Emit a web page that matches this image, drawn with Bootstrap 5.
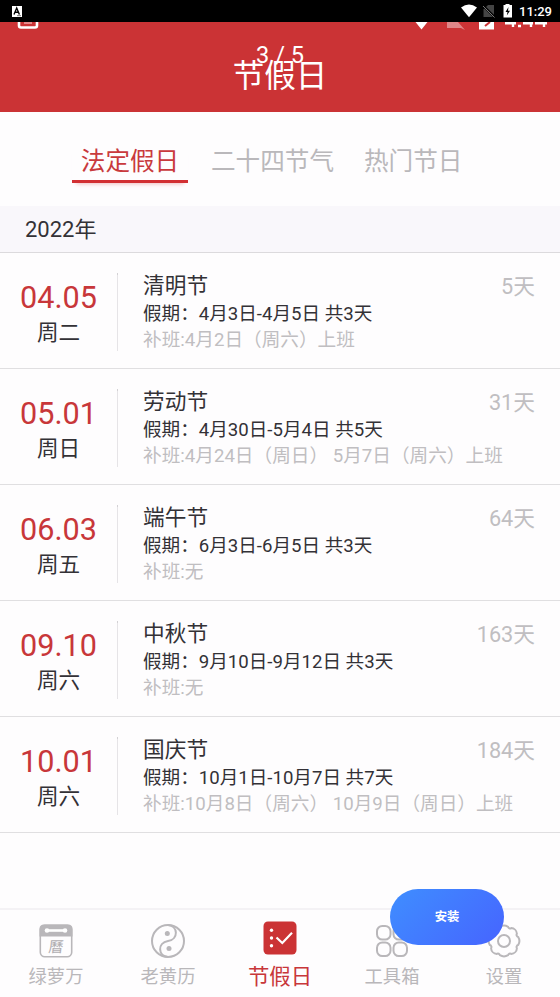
<!DOCTYPE html>
<html lang="zh-CN">
<head>
<meta charset="utf-8">
<meta name="viewport" content="width=device-width, initial-scale=1">
<title>节假日</title>
<link rel="stylesheet" href="https://cdn.jsdelivr.net/npm/bootstrap@5.3.0/dist/css/bootstrap.min.css">
<style>
body{font-family:Roboto,"Noto Sans CJK SC",sans-serif;background:#fefdfe;color:#333136;width:560px;height:997px;overflow:hidden}
.statusbar{height:22px;background:#000;flex:none}
.clock{font-size:13px;font-weight:500;line-height:23px}
.app-header{height:90px;background:#cb3335;flex:none;overflow:hidden}
.app-title{font-size:31.5px;line-height:40px;padding-top:35px}
.under-status{top:0;left:0}
.pager{top:19px;left:0;font-size:23.6px;line-height:28px}
.tabs{height:94px;flex:none;padding:32px 0 0 72px;font-size:24.6px;line-height:36px;color:#bab8bb}
.tab-on{width:116px;color:#c93a3d;height:39px;border-bottom:3px solid #d22f33;box-shadow:0 5px 4px -4px #f0bcc0}
.tab-second{margin-left:23px}
.tab-third{margin-left:30px}
.year{height:47px;flex:none;background:#f9f7fb;border-bottom:1px solid #dcdadd;padding-left:25px;font-size:22px;line-height:48px}
.holiday{height:116px;border-bottom:1px solid #e0dfe1}
.date-col{width:117px;padding-top:27px}
.date-num{font-size:30.6px;line-height:36px;color:#c8373a}
.weekday{font-size:21.6px;line-height:34px}
.rule{width:1px;height:78px;margin-top:20px;background:#e6e4e7;border-top:2px solid #d3d1d4}
.info{padding:19px 25px 0 25px}
.hname{font-size:21.7px;line-height:28px}
.days{font-size:21.7px;line-height:30px;color:#c0bec1}
.span-line{font-size:18.6px;line-height:27px;margin-top:-1px}
.work-line{font-size:18.65px;line-height:25px;color:#c0bec1}
.bottom{height:89px;border-top:2px solid #f4f2f5;color:#b9b7ba;font-size:18.3px;line-height:28px}
.bottom .slot{width:112px;padding-top:13px}
.bottom .slot.on{color:#c8373a;font-size:21.4px;padding-top:10px}
.slot svg{display:block;width:36px;height:36px;flex:none}
.slot span{margin-top:4px}
.slot.on span{margin-top:7px}
.install{left:390px;top:889px;width:114px;height:56px;font-size:12.3px;font-weight:700;color:#fff;background:linear-gradient(135deg,#3f8eff,#4664ff)}
</style>
</head>
<body class="d-flex flex-column position-relative">
<div class="statusbar d-flex align-items-center text-white">
<svg width="560" height="22" class="position-absolute">
<rect x="12" y="6" width="10" height="11" fill="#fff"/><path d="M14 14.500L16.700 8L19.400 14.500M15 12.300H18.400" fill="none" stroke="#000" stroke-width="1.400"/><path d="M17 15.700h4" stroke="#555" stroke-width=".8"/>
<path d="M461 7.600Q469 1.600 477 7.600L469 17.200Z" fill="#fff"/>
<path d="M488 5H494V17H483.500V9.500Z" fill="#444"/><path d="M483 5.500L495 17.500" stroke="#000" stroke-width="2.400"/><path d="M483 6L494.500 17.500" stroke="#777" stroke-width="1"/>
<path d="M503.500 5H505.500V4H509.500V5H512V17.500H503.500Z" fill="#fff"/><path d="M508.500 7L505.500 12H507.500L506.800 15.500L510 10.700H508Z" fill="#000"/>
</svg>
<div class="clock ms-auto pe-2">11:29</div>
</div>
<header class="app-header position-relative text-center text-white">
<svg class="under-status position-absolute" width="560" height="10">
<path d="M19 0V3.500Q19 5.500 21 5.500H35Q37 5.500 37 3.500V0" fill="none" stroke="#fff" stroke-width="2.600"/><path d="M24 1H32" stroke="#f3b9ba" stroke-width="1.300"/>
<path d="M415.500 0H427.500L421.500 7.500Z" fill="#fff"/>
<path d="M447 0H458L465 8L461 6H447Z" fill="#e08688"/>
<path d="M479 0H494V7.500H479Z" fill="#fff"/><path d="M485 4L490 0" stroke="#cb3335" stroke-width="2"/>
<g fill="none" stroke="#fff" stroke-width="2.400"><path d="M505 1.200H516M513 0V5M518 4H521M523 1.200H533M531 0V5M535 1.200H547M544 0V5"/></g>
</svg>
<div class="app-title">节假日</div>
<div class="pager position-absolute w-100">3 / 5</div>
</header>
<nav class="tabs d-flex">
<div class="tab-on text-center">法定假日</div>
<div class="tab-second">二十四节气</div>
<div class="tab-third">热门节日</div>
</nav>
<div class="year">2022年</div>
<main>
<section class="holiday d-flex">
<div class="date-col text-center"><div class="date-num">04.05</div><div class="weekday">周二</div></div><div class="rule"></div>
<div class="info flex-grow-1"><div class="d-flex justify-content-between hname"><span>清明节</span><span class="days">5天</span></div><div class="span-line">假期：4月3日-4月5日 共3天</div><div class="work-line">补班:4月2日（周六）上班</div></div>
</section>
<section class="holiday d-flex">
<div class="date-col text-center"><div class="date-num">05.01</div><div class="weekday">周日</div></div><div class="rule"></div>
<div class="info flex-grow-1"><div class="d-flex justify-content-between hname"><span>劳动节</span><span class="days">31天</span></div><div class="span-line">假期：4月30日-5月4日 共5天</div><div class="work-line">补班:4月24日（周日） 5月7日（周六）上班</div></div>
</section>
<section class="holiday d-flex">
<div class="date-col text-center"><div class="date-num">06.03</div><div class="weekday">周五</div></div><div class="rule"></div>
<div class="info flex-grow-1"><div class="d-flex justify-content-between hname"><span>端午节</span><span class="days">64天</span></div><div class="span-line">假期：6月3日-6月5日 共3天</div><div class="work-line">补班:无</div></div>
</section>
<section class="holiday d-flex">
<div class="date-col text-center"><div class="date-num">09.10</div><div class="weekday">周六</div></div><div class="rule"></div>
<div class="info flex-grow-1"><div class="d-flex justify-content-between hname"><span>中秋节</span><span class="days">163天</span></div><div class="span-line">假期：9月10日-9月12日 共3天</div><div class="work-line">补班:无</div></div>
</section>
<section class="holiday d-flex">
<div class="date-col text-center"><div class="date-num">10.01</div><div class="weekday">周六</div></div><div class="rule"></div>
<div class="info flex-grow-1"><div class="d-flex justify-content-between hname"><span>国庆节</span><span class="days">184天</span></div><div class="span-line">假期：10月1日-10月7日 共7天</div><div class="work-line">补班:10月8日（周六） 10月9日（周日）上班</div></div>
</section>
</main>
<footer class="bottom d-flex mt-auto">
<div class="slot d-flex flex-column align-items-center">
<svg viewBox="0 0 36 36" fill="none" stroke="#b9b7ba"><rect x="2.300" y="2.300" width="31.400" height="31.400" rx="4.500" stroke-width="1.600"/><path d="M1.500 13.500V6Q1.500 1.500 6 1.500H30Q34.500 1.500 34.500 6V13.500Z" fill="#b9b7ba" stroke="none"/><path d="M9 7.500H27" stroke="#fff" stroke-width="2.600"/><circle cx="9" cy="7.500" r="2.300" fill="#fff" stroke="none"/><circle cx="27" cy="7.500" r="2.300" fill="#fff" stroke="none"/><text x="12" y="29.500" font-size="15" fill="#b0aeb1" stroke="none" transform="skewX(-6) translate(1 0)">曆</text></svg>
<span>绿萝万</span></div>
<div class="slot d-flex flex-column align-items-center">
<svg viewBox="0 0 36 36" fill="none" stroke="#b9b7ba" stroke-width="2"><circle cx="18" cy="18" r="16"/><path d="M18 2C28 3 29 16 18 18C7 20 8 33 18 34"/><circle cx="17.300" cy="10.500" r="2.500" fill="#b9b7ba" stroke="none"/><circle cx="19" cy="25.500" r="2.500" fill="#b9b7ba" stroke="none"/></svg>
<span>老黄历</span></div>
<div class="slot on d-flex flex-column align-items-center">
<svg viewBox="0 0 36 36"><rect x="1.500" y="1.500" width="33" height="33" rx="4.500" fill="#cb3335"/><g fill="#fff"><circle cx="9.500" cy="10.300" r="1.700"/><circle cx="9.500" cy="18" r="1.700"/><circle cx="9.500" cy="25.700" r="1.700"/></g><path d="M14.500 17.500L20.300 23L30 12.800" fill="none" stroke="#fff" stroke-width="2.200"/></svg>
<span>节假日</span></div>
<div class="slot d-flex flex-column align-items-center">
<svg viewBox="0 0 36 36" fill="none" stroke="#b9b7ba" stroke-width="2"><rect x="3" y="3" width="13.500" height="13.500" rx="5.300"/><rect x="19.500" y="3" width="13.500" height="13.500" rx="5.300"/><rect x="3" y="19.500" width="13.500" height="13.500" rx="5.300"/><rect x="19.500" y="19.500" width="13.500" height="13.500" rx="5.300"/></svg>
<span>工具箱</span></div>
<div class="slot d-flex flex-column align-items-center">
<svg viewBox="-18 -18 36 36" fill="none" stroke="#b9b7ba" stroke-width="2" stroke-linejoin="round"><circle r="6"/><path d="M14.200 -4.100A8 8 0 0 1 14.200 4.100A2 2 0 0 0 12.900 7.200A6 6 0 0 1 7.200 12.900A2 2 0 0 0 4.100 14.200A8 8 0 0 1 -4.100 14.200A2 2 0 0 0 -7.200 12.900A6 6 0 0 1 -12.900 7.200A2 2 0 0 0 -14.200 4.100A8 8 0 0 1 -14.200 -4.100A2 2 0 0 0 -12.900 -7.200A6 6 0 0 1 -7.200 -12.900A2 2 0 0 0 -4.100 -14.200A8 8 0 0 1 4.100 -14.200A2 2 0 0 0 7.200 -12.900A6 6 0 0 1 12.900 -7.200A2 2 0 0 0 14.200 -4.100Z"/></svg>
<span>设置</span></div>
</footer>
<button type="button" class="install btn rounded-pill border-0 p-0 position-absolute">安装</button>
<script src="https://cdn.jsdelivr.net/npm/bootstrap@5.3.0/dist/js/bootstrap.bundle.min.js"></script>
</body>
</html>
